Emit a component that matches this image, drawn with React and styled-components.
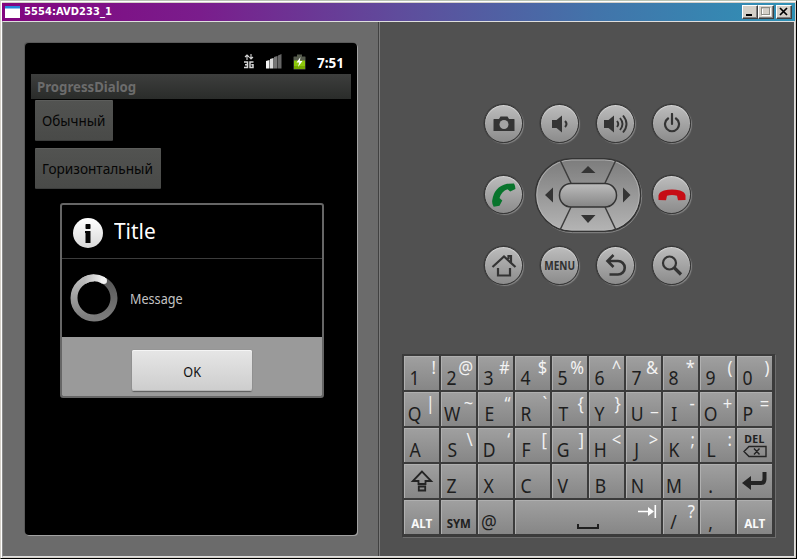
import React from 'react';
import styled, { createGlobalStyle } from 'styled-components';

const Global = createGlobalStyle`
  * { box-sizing: border-box; }
  body { margin: 0; background: #000; font-family: "Noto Sans", "Open Sans", sans-serif; }
  svg { display: block; flex: none; }
`;

const Window = styled.div`
  width: 797px;
  height: 559px;
  overflow: hidden;
  display: flex;
  flex-direction: column;
  background: #d4d0c8;
  border: 1px solid;
  border-color: #b9c4b4 #000 #000 #d4d0c8;
  padding: 2px 1px 1px 1px;
  box-shadow: inset 1px 1px 0 #fff;
`;

const TitleBar = styled.header`
  height: 18px;
  flex: none;
  display: flex;
  align-items: center;
  padding: 0 3px 0 3px;
  background: linear-gradient(90deg, #82057f 0%, #7a1d8c 25%, #5f4c9c 50%, #4274aa 75%, #2f92b6 100%);
`;

const WindowTitle = styled.h1`
  margin: 0 auto 0 4px;
  color: #fff;
  font: bold 11px/18px "DejaVu Sans Condensed", "DejaVu Sans", sans-serif;
  font-stretch: condensed;
  letter-spacing: 0.1px;
`;

const Caption = styled.button`
  width: 16px;
  height: 14px;
  padding: 0;
  margin-left: ${(p) => p.$gap || 0}px;
  background: #d4d0c8;
  border: 1px solid;
  border-color: #fff #404040 #404040 #fff;
  box-shadow: inset -1px -1px 0 #808080;
`;

const Body = styled.main`
  flex: 1;
  display: flex;
  min-height: 0;
  border: 1px solid #dedede;
  border-left: 1px solid #8b8b8b;
`;

const DevicePane = styled.section`
  width: 376px;
  flex: none;
  padding: 21px 0 0 22px;
  background: #6b6b6b;
  border-right: 1px solid #414141;
`;

const ControlPane = styled.section`
  flex: 1;
  display: flex;
  flex-direction: column;
  align-items: flex-start;
  background: #515151;
  border-left: 1px solid #7b7b7b;
  padding: 80px 0 0 22px;
`;

const Bezel = styled.div`
  position: relative;
  width: 332px;
  height: 492px;
  padding: 6px;
  background: #000;
  border-radius: 4px;
  box-shadow: 1px 1px 0 #a2a2a2, -1px -1px 0 #5a5a5a;
`;

/* Squeezes lettering horizontally to get a semi-condensed humanist face. */
const Narrow = styled.span`
  display: inline-block;
  white-space: nowrap;
  transform: scaleX(${(p) => p.$x});
  transform-origin: ${(p) => p.$from || 'center'} center;
`;

const StatusBar = styled.div`
  height: 25px;
  display: flex;
  align-items: center;
  justify-content: flex-end;
  padding-right: 6px;
`;

const StatusGap = styled.span`
  width: ${(p) => p.$w}px;
`;

const Clock = styled.span`
  margin-left: 11px;
  width: 28px;
  color: #fff;
  font-size: 14.5px;
  line-height: 24px;
  font-weight: 700;
`;

const AppTitle = styled.h2`
  margin: 0;
  height: 25px;
  padding-left: 6px;
  background: linear-gradient(#3d3e3d, #2a2c2a);
  color: #6c6c6c;
  font-size: 14.5px;
  line-height: 24px;
  font-weight: 700;
`;

const AppButton = styled.button`
  display: flex;
  align-items: center;
  width: ${(p) => p.$w}px;
  height: 41px;
  margin: ${(p) => p.$top}px 0 0 4px;
  padding: 0 0 1px 7px;
  border: 0;
  border-top: 1px solid #5c5d5b;
  border-bottom: 1px solid #3c3d3c;
  border-radius: 1px;
  background: linear-gradient(#525351, #494a48);
  color: #060606;
  font: 14.5px/20px "Noto Sans", sans-serif;
`;

const Dialog = styled.div`
  position: absolute;
  left: 35px;
  top: 160px;
  width: 264px;
  height: 195px;
  display: flex;
  flex-direction: column;
  border: 2px solid #666;
  border-radius: 3px;
  background: #000;
  overflow: hidden;
`;

const DialogHead = styled.div`
  height: 54px;
  display: flex;
  align-items: center;
  padding: 2px 0 0 11px;
  border-bottom: 1px solid #3c3c3c;
`;

const DialogTitle = styled.h3`
  margin: 0 0 5px 11px;
  color: #fff;
  font-size: 22px;
  line-height: 30px;
  font-weight: 400;
`;

const DialogBody = styled.div`
  height: 78px;
  display: flex;
  align-items: center;
  padding-left: 8px;
`;

const Message = styled.p`
  margin: 0 0 0 12px;
  color: #c4c4c4;
  font-size: 14.5px;
  line-height: 20px;
`;

const DialogFoot = styled.div`
  flex: 1;
  display: flex;
  justify-content: center;
  padding-top: 13px;
  background: #9a9a9a;
`;

const OkButton = styled.button`
  width: 120px;
  height: 41px;
  padding: 0;
  border: 0;
  border-radius: 2px;
  background: linear-gradient(#e6e6e6, #cdcdcd);
  box-shadow: inset 0 1px 0 #f5f5f5, inset 0 -1px 0 #b5b5b5, 0 1px 1px #5c5c5c, 0 0 1px #777;
  color: #111;
  font: 14.5px/20px "Noto Sans", sans-serif;
`;

const PhoneControls = styled.div`
  margin-left: 82px;
  display: grid;
  grid-template-columns: repeat(4, 40px);
  grid-template-rows: repeat(3, 43px);
  column-gap: 16px;
  row-gap: 28px;
  align-items: center;
  height: 185px;
`;

const RoundButton = styled.button`
  width: 39px;
  height: 39px;
  padding: 0;
  display: flex;
  align-items: center;
  justify-content: center;
  border: 1.5px solid #343434;
  border-radius: 50%;
  background: linear-gradient(#bebebe, #8a8a8a) border-box;
  box-shadow: 1px 1px 1px #858585, 0 0 0 0.5px #3a3a3a, inset 0 1px 1px #d4d4d4;
  color: #303030;
  font: bold 11.5px/12px "Noto Sans", sans-serif;
`;

const DPadSlot = styled.div`
  grid-column: 2 / 4;
  display: flex;
  justify-content: center;
  align-items: center;
  height: 43px;
`;

const Keyboard = styled.div`
  margin-top: 67px;
  display: grid;
  grid-template-columns: repeat(10, 36px);
  grid-template-rows: repeat(5, 35px);
  gap: 1px;
  padding: 1px;
  background: #3b3b3b;
  border: 1px solid #3b3b3b;
  box-shadow: 1px 1px 0 #6d6d6d;
`;

const Key = styled.div`
  grid-column: span ${(p) => p.$span || 1};
  display: flex;
  align-items: ${(p) => (p.$icon ? 'center' : 'flex-start')};
  justify-content: ${(p) => (p.$icon ? 'center' : 'flex-start')};
  min-width: 0;
  border-right: 1px solid #3b3b3b;
  border-bottom: 1px solid #3b3b3b;
  background: linear-gradient(#a0a0a0, #868686);
  box-shadow: inset 1px 1px 0 #b0b0b0;
`;

const KeyMain = styled.span`
  width: 22px;
  flex: none;
  display: flex;
  justify-content: center;
  margin-top: 10px;
  color: #1e1e1e;
  font-size: 19.5px;
  line-height: 24px;
`;

const KeyAlt = styled.span`
  flex: 1;
  width: 0;
  display: flex;
  justify-content: flex-end;
  padding-right: ${(p) => p.$inset}px;
  color: #f2f2f2;
  font-size: 18px;
  line-height: 22px;
`;

const KeyWord = styled.span`
  margin-top: 11px;
  color: ${(p) => (p.$light ? '#fafafa' : '#202020')};
  font-size: 13px;
  line-height: 14px;
  font-weight: 700;
`;

const DelStack = styled.span`
  display: flex;
  flex-direction: column;
  align-items: center;
  color: #202020;
  font-size: 10.5px;
  line-height: 12px;
  font-weight: 700;
  letter-spacing: 0.4px;
`;

const Spacebar = styled.span`
  flex: 1;
  height: 34px;
  display: flex;
  justify-content: space-between;
  padding: 23px 4px 0 62px;
`;

const TabSlot = styled.span`
  margin-top: -19px;
`;

const WindowIcon = () => (
  <svg width="15" height="12" viewBox="0 0 15 12">
    <rect width="15" height="12" fill="#fff" />
    <rect width="15" height="2.5" fill="#2486dc" />
  </svg>
);

const MinIcon = () => (
  <svg width="14" height="12"><rect x="3" y="8" width="6" height="2" fill="#000" /></svg>
);
const MaxIcon = () => (
  <svg width="14" height="12" fill="none">
    <rect x="3.5" y="2.5" width="8" height="7" stroke="#fff" />
    <rect x="2.5" y="1.5" width="8" height="7" stroke="#8d8d86" />
    <path d="M2 2h9" stroke="#8d8d86" />
  </svg>
);
const CloseIcon = () => (
  <svg width="14" height="12"><path d="M3 2l7 7M10 2l-7 7" stroke="#000" strokeWidth="1.7" /></svg>
);

const NetworkIcon = () => (
  <svg width="10" height="15" viewBox="0 0 10 15" fill="none" stroke="#d5d5d5">
    <path d="M3 6V1M1 3l2-2 2 2M7 0v5M5.300 3L7 5l2-2" strokeWidth="1.100" />
    <path d="M0 8h3.500v5.500H0M1 10.700h2.500M9.500 8H6v5.500h3v-2.700H7.300" strokeWidth="1.500" />
  </svg>
);

const SignalIcon = () => (
  <svg width="16" height="15" viewBox="0 0 16 15">
    <path d="M0 7l3.500-1v8.500H0z" fill="#f4f4f4" />
    <path d="M4 5l3.500-1v10.500H4z" fill="#dcdcdc" />
    <path d="M8 3l3.500-1v12.500H8z" fill="#777" />
    <path d="M12 1.500l3.500-1.500v14.500H12z" fill="#666" />
  </svg>
);

const BatteryIcon = () => (
  <svg width="13" height="16" viewBox="0 0 13 16">
    <path d="M4 0.500h5v2h3q.5 0 .5.500v12q0 .5-.5.500H1q-.5 0-.5-.5V3q0-.5.5-.5h3z" fill="#555b4c" />
    <path d="M1 6.500h11v8.500H1z" fill="#8cc80a" />
    <path d="M1 12h11v3H1z" fill="#76a900" />
    <path d="M7.500 3L3.500 8.500h2.700L5 13l4.500-6H6.800z" fill="#fff" />
  </svg>
);

const InfoIcon = () => (
  <svg width="30" height="30" viewBox="0 0 30 30">
    <defs>
      <linearGradient id="info" x1="0" y1="0" x2="0" y2="1">
        <stop offset="0" stopColor="#fff" /><stop offset="1" stopColor="#d9d9d9" />
      </linearGradient>
    </defs>
    <circle cx="15" cy="15" r="15" fill="url(#info)" />
    <rect x="12.500" y="6" width="5" height="5" rx="0.7" fill="#050505" />
    <path d="M12 13h5.500v12h-5V15H12z" fill="#050505" />
  </svg>
);

const Spinner = () => (
  <svg width="48" height="48" viewBox="0 0 48 48" fill="none">
    <defs>
      <linearGradient id="ring" x1="0" y1="0" x2="0" y2="1">
        <stop offset="0" stopColor="#bebebe" /><stop offset="1" stopColor="#7c7c7c" />
      </linearGradient>
      <linearGradient id="ringDark" x1="0" y1="0" x2="0" y2="1">
        <stop offset="0" stopColor="#585858" /><stop offset="1" stopColor="#7c7c7c" />
      </linearGradient>
      <linearGradient id="ringHot" x1="0" y1="0" x2="1" y2="0">
        <stop offset="0" stopColor="#b8b8b8" /><stop offset="1" stopColor="#f2f2f2" />
      </linearGradient>
    </defs>
    <path d="M24 44A20 20 0 0 1 24 4" stroke="url(#ring)" strokeWidth="7" />
    <path d="M34 6.700A20 20 0 0 1 24 44" stroke="url(#ringDark)" strokeWidth="7" />
    <path d="M14 6.700A20 20 0 0 1 33.500 6.400" stroke="url(#ringHot)" strokeWidth="7" />
    <circle cx="33.800" cy="6.700" r="3.200" fill="#f2f2f2" />
  </svg>
);

const CameraIcon = () => (
  <svg width="22" height="16" viewBox="0 0 22 16">
    <path d="M1 3h5l1.500-2.500h7L16 3h5q.5 0 .5.500V15H.5V3.500Q.5 3 1 3z" fill="#343434" />
    <circle cx="11" cy="8.500" r="4.500" fill="#a3a3a3" />
  </svg>
);
const QuietIcon = () => (
  <svg width="20" height="18" viewBox="0 0 20 18">
    <path d="M2 5h4.500L12 0.500v17L6.500 13H2z" fill="#343434" />
    <path d="M15 6q3 3 0 6" fill="none" stroke="#343434" strokeWidth="2" />
  </svg>
);
const LoudIcon = () => (
  <svg width="26" height="20" viewBox="0 0 26 20" fill="none" stroke="#343434" strokeWidth="1.900">
    <path d="M1 6h4.500L11 1.500v17L5.500 14H1z" fill="#343434" stroke="none" />
    <path d="M14 7q2.500 3 0 6M17 4q5 6 0 12M20 1.500q7 8.500 0 17" />
  </svg>
);
const PowerIcon = () => (
  <svg width="20" height="22" viewBox="0 0 20 22" fill="none" stroke="#343434" strokeWidth="2.200">
    <path d="M6 5.500a7 7 0 1 0 8 0M10 1v10" strokeLinecap="round" />
  </svg>
);
const CallIcon = () => (
  <svg width="24" height="24" viewBox="0 0 24 24">
    <path d="M15 .8L22 .4q1.500 2.600 1.400 5.600L18.200 8.500 15.500 6.300Q9.500 8.500 7.500 15l2.800 2.500-2.800 5.300-5.800.9Q-.2 21.500.2 17.500 2 4 15 .8z" fill="#08742c" />
  </svg>
);
const EndIcon = () => (
  <svg width="28" height="12" viewBox="0 0 28 12">
    <path d="M.5 11V6.500Q1 3 6 1.500 14-.7 22 1.500q5 1.500 5.500 5V11l-7.500.3-1-4.500Q14 5.300 9 6.800L8 11.300z" fill="#c60d16" />
  </svg>
);
const HomeIcon = () => (
  <svg width="26" height="24" viewBox="0 0 26 24" fill="none" stroke="#343434" strokeWidth="2.200">
    <path d="M1.500 13L13 2.500 24.500 13M7 14v7.500h12V14M17.500 5V2H20v7" />
  </svg>
);
const BackIcon = () => (
  <svg width="22" height="24" viewBox="0 0 22 24" fill="none" stroke="#343434" strokeWidth="2.600">
    <path d="M2.500 7H13a6.500 6.500 0 0 1 0 13.500H4.500M8.500 1L2.500 7l6 6" />
  </svg>
);
const SearchIcon = () => (
  <svg width="24" height="24" viewBox="0 0 24 24" fill="none" stroke="#343434">
    <circle cx="9.500" cy="9" r="6.500" strokeWidth="2.200" />
    <path d="M14 13.500l7 7" strokeWidth="3.200" />
  </svg>
);

const DPad = () => (
  <svg width="110" height="78" viewBox="0 0 110 78">
    <defs>
      <linearGradient id="pad" x1="0" y1="0" x2="0" y2="1">
        <stop offset="0" stopColor="#7c7c7c" /><stop offset="1" stopColor="#b4b4b4" />
      </linearGradient>
      <linearGradient id="padKey" x1="0" y1="0" x2="0" y2="1">
        <stop offset="0" stopColor="#bdbdbd" /><stop offset="1" stopColor="#858585" />
      </linearGradient>
    </defs>
    <rect x="3.200" y="3.700" width="105.500" height="73" rx="36.500" fill="none" stroke="#858585" />
    <rect x="2.500" y="2.700" width="105" height="72.500" rx="36.200" fill="url(#pad)" stroke="#343434" strokeWidth="1.500" />
    <rect x="3.800" y="4" width="102.500" height="70" rx="35" fill="none" stroke="#b8b8b8" strokeWidth=".8" />
    <path d="M27 4l11 23M83 4L72 27M38 51L27 74M72 51l11 23" stroke="#3d3d3d" strokeWidth="1.500" />
    <path d="M48 17l7-7 7.500 7zM48 59h14.500L55 67zM20 31.500v15L12 39zM90 31.500v15l7.500-7.500z" fill="#343434" />
    <rect x="26.500" y="27.500" width="57" height="23.500" rx="11.500" fill="url(#padKey)" stroke="#343434" strokeWidth="1.500" />
  </svg>
);

const ShiftIcon = () => (
  <svg width="24" height="24" viewBox="0 0 24 24" fill="none" stroke="#242424" strokeWidth="1.800">
    <path d="M12 2.500L2.800 12h5.700v3h7v-3h5.700zM8.800 17.500h6.400v4H8.800z" />
  </svg>
);
const EraseIcon = () => (
  <svg width="24" height="13" viewBox="0 0 24 13" fill="none" stroke="#242424" strokeWidth="1.400">
    <path d="M1 6.500L6 1.500h17v10H6zM11 3.500l5.500 6M16.500 3.500l-5.500 6" />
  </svg>
);
const EnterIcon = () => (
  <svg width="26" height="20" viewBox="0 0 26 20">
    <path d="M22.500 1v7q0 4-3.500 4H8" fill="none" stroke="#242424" strokeWidth="4" />
    <path d="M0 12l9-7v14z" fill="#242424" />
  </svg>
);
const SpaceIcon = () => (
  <svg width="22" height="7" viewBox="0 0 22 7" fill="none">
    <path d="M1 1v4h20V1" stroke="#202020" strokeWidth="2" />
  </svg>
);
const TabIcon = () => (
  <svg width="20" height="15" viewBox="0 0 20 15">
    <path d="M1 7.500h12M18.300 1v13" stroke="#fff" strokeWidth="1.600" />
    <path d="M11 3l6 4.500-6 4.500z" fill="#fff" />
  </svg>
);

const ROWS = [
  ['1!', '2@', '3#', '4$', '5%', '6^', '7&', '8*', '9(', '0)'],
  ['Q|', 'W~', 'E“', 'R`', 'T{', 'Y}', 'U_', 'I-', 'O+', 'P='],
  ['A', 'S\\', 'D‘', 'F[', 'G]', 'H<', 'J>', 'K;', 'L:'],
];

const CharKey = ({ pair }) => (
  <Key>
    <KeyMain><Narrow $x={0.9}>{pair[0]}</Narrow></KeyMain>
    {pair[1] && (
      <KeyAlt $inset={pair[1] === '|' ? 4 : 3}>
        <Narrow $x={0.92} $from="right">{pair[1]}</Narrow>
      </KeyAlt>
    )}
  </Key>
);

export default function App() {
  return (
    <>
      <Global />
      <Window>
        <TitleBar>
          <WindowIcon />
          <WindowTitle>5554:AVD233_1</WindowTitle>
          <Caption><MinIcon /></Caption>
          <Caption><MaxIcon /></Caption>
          <Caption $gap={2}><CloseIcon /></Caption>
        </TitleBar>
        <Body>
          <DevicePane>
            <Bezel>
              <StatusBar>
                <NetworkIcon />
                <StatusGap $w={12} />
                <SignalIcon />
                <StatusGap $w={11} />
                <BatteryIcon />
                <Clock><Narrow $x={0.93} $from="left">7:51</Narrow></Clock>
              </StatusBar>
              <AppTitle><Narrow $x={0.91} $from="left">ProgressDialog</Narrow></AppTitle>
              <AppButton $w={78} $top={1}><Narrow $x={0.93} $from="left">Обычный</Narrow></AppButton>
              <AppButton $w={126} $top={7}><Narrow $x={0.94} $from="left">Горизонтальный</Narrow></AppButton>
              <Dialog>
                <DialogHead>
                  <InfoIcon />
                  <DialogTitle><Narrow $x={0.95} $from="left">Title</Narrow></DialogTitle>
                </DialogHead>
                <DialogBody>
                  <Spinner />
                  <Message><Narrow $x={0.87} $from="left">Message</Narrow></Message>
                </DialogBody>
                <DialogFoot>
                  <OkButton><Narrow $x={0.87}>OK</Narrow></OkButton>
                </DialogFoot>
              </Dialog>
            </Bezel>
          </DevicePane>
          <ControlPane>
            <PhoneControls>
              <RoundButton><CameraIcon /></RoundButton>
              <RoundButton><QuietIcon /></RoundButton>
              <RoundButton><LoudIcon /></RoundButton>
              <RoundButton><PowerIcon /></RoundButton>
              <RoundButton><CallIcon /></RoundButton>
              <DPadSlot><DPad /></DPadSlot>
              <RoundButton><EndIcon /></RoundButton>
              <RoundButton><HomeIcon /></RoundButton>
              <RoundButton><Narrow $x={0.87}>MENU</Narrow></RoundButton>
              <RoundButton><BackIcon /></RoundButton>
              <RoundButton><SearchIcon /></RoundButton>
            </PhoneControls>
            <Keyboard>
              {ROWS.flat().map((pair) => <CharKey key={pair} pair={pair} />)}
              <Key $icon>
                <DelStack>DEL<EraseIcon /></DelStack>
              </Key>
              <Key $icon><ShiftIcon /></Key>
              {['Z', 'X', 'C', 'V', 'B', 'N', 'M', '.'].map((c) => <CharKey key={c} pair={c} />)}
              <Key $icon><EnterIcon /></Key>
              <Key $icon><KeyWord $light><Narrow $x={0.9}>ALT</Narrow></KeyWord></Key>
              <Key $icon><KeyWord><Narrow $x={0.88}>SYM</Narrow></KeyWord></Key>
              <CharKey pair="@" />
              <Key $span={4}>
                <Spacebar><SpaceIcon /><TabSlot><TabIcon /></TabSlot></Spacebar>
              </Key>
              <CharKey pair="/?" />
              <CharKey pair="," />
              <Key $icon><KeyWord $light><Narrow $x={0.9}>ALT</Narrow></KeyWord></Key>
            </Keyboard>
          </ControlPane>
        </Body>
      </Window>
    </>
  );
}
